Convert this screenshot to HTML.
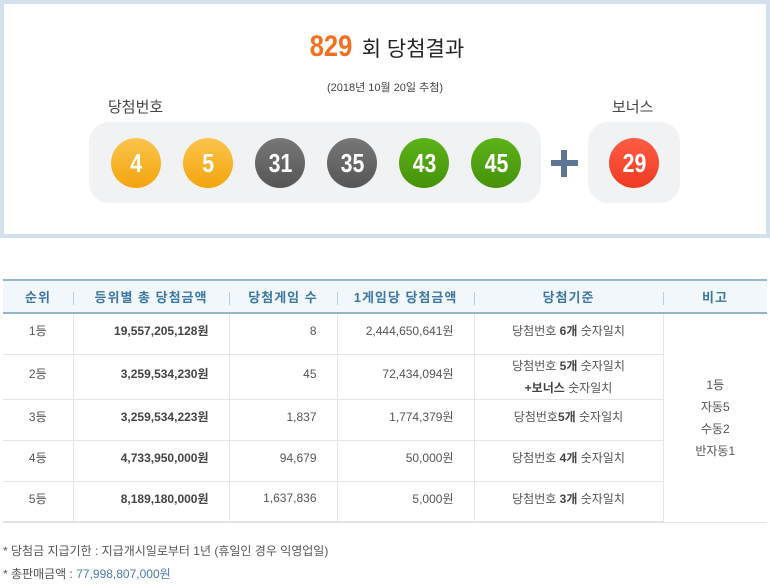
<!DOCTYPE html>
<html><head><meta charset="utf-8"><style>
*{margin:0;padding:0;box-sizing:border-box}
body{width:770px;height:586px;background:#fff;font-family:"Liberation Sans","Noto Sans CJK KR",sans-serif;position:relative;overflow:hidden;color:#333}
.top{position:absolute;left:0;top:0;width:770px;height:238px;border:4px solid #d4e1ed;background:#fff}
.a{position:absolute;white-space:nowrap}
.ball{position:absolute;top:138px;width:50px;height:50px;border-radius:50%;color:#fff;font-weight:bold;font-size:26px;text-align:center;line-height:50px}
.ball span{display:inline-block;transform:scaleX(0.82)}
.y{background:linear-gradient(#fbc44b,#f3a40d)}
.g{background:linear-gradient(#777,#555)}
.gr{background:linear-gradient(#5cb31a,#469209)}
.r{background:linear-gradient(#ff5c45,#ef3b23)}
table{position:absolute;left:3px;top:279px;width:764px;border-collapse:collapse;font-size:12px;color:#555}
th{height:33px;background:#f1f7fb;color:#3d78a4;font-weight:bold;font-size:13px;letter-spacing:1px;border-top:2px solid #94b5cc;border-bottom:2px solid #94b5cc;position:relative}
th+th:before{content:"";position:absolute;left:0;top:11px;height:13px;border-left:1px solid #b8cfdf}
td{border-bottom:1px solid #e5e5e5;border-left:1px solid #e5e5e5;height:41px;padding-bottom:6px}
td:first-child{border-left:none}
.n{text-align:right;padding-right:20px}
.c{text-align:center}
b{color:#444}
</style></head><body>
<div class="top"></div>
<div class="a" style="left:0;width:770px;top:30px;text-align:center;font-size:21px;color:#222"><span style="color:#f37021;font-weight:bold;font-size:30px;display:inline-block;transform:scaleX(0.85)">829</span> 회 당첨결과</div>
<div class="a" style="left:0;width:770px;top:79px;text-align:center;font-size:11px;color:#444">(2018년 10월 20일 추첨)</div>
<div class="a" style="left:108px;top:96px;font-size:15px;color:#444">당첨번호</div>
<div class="a" style="left:612px;top:96px;font-size:15px;color:#444">보너스</div>
<div class="a" style="left:89px;top:122px;width:452px;height:81px;background:#f1f2f4;border-radius:20px"></div>
<div class="a" style="left:588px;top:122px;width:92px;height:81px;background:#f1f2f4;border-radius:20px"></div>
<div class="ball y" style="left:111px"><span>4</span></div>
<div class="ball y" style="left:183px"><span>5</span></div>
<div class="ball g" style="left:255px"><span>31</span></div>
<div class="ball g" style="left:327px"><span>35</span></div>
<div class="ball gr" style="left:399px"><span>43</span></div>
<div class="ball gr" style="left:471px"><span>45</span></div>
<div class="ball r" style="left:609px"><span>29</span></div>
<div class="a" style="left:551px;top:160px;width:27px;height:6px;background:#5d7593"></div>
<div class="a" style="left:561px;top:150px;width:6px;height:27px;background:#5d7593"></div>
<table>
<tr><th style="width:70px">순위</th><th style="width:156px">등위별 총 당첨금액</th><th style="width:108px">당첨게임 수</th><th style="width:137px">1게임당 당첨금액</th><th style="width:189px">당첨기준</th><th>비고</th></tr>
<tr><td class="c">1등</td><td class="n"><b>19,557,205,128원</b></td><td class="n">8</td><td class="n">2,444,650,641원</td><td class="c">당첨번호 <b>6개</b> 숫자일치</td><td rowspan="5" class="c" style="line-height:22px;padding-top:6px">1등<br>자동5<br>수동2<br>반자동1</td></tr>
<tr><td class="c" style="height:44px">2등</td><td class="n"><b>3,259,534,230원</b></td><td class="n">45</td><td class="n">72,434,094원</td><td class="c" style="line-height:22px;padding:0">당첨번호 <b>5개</b> 숫자일치<br><b>+보너스</b> 숫자일치</td></tr>
<tr><td class="c">3등</td><td class="n"><b>3,259,534,223원</b></td><td class="n">1,837</td><td class="n">1,774,379원</td><td class="c">당첨번호<b>5개</b> 숫자일치</td></tr>
<tr><td class="c">4등</td><td class="n"><b>4,733,950,000원</b></td><td class="n">94,679</td><td class="n">50,000원</td><td class="c">당첨번호 <b>4개</b> 숫자일치</td></tr>
<tr><td class="c" style="border-bottom:2px solid #e3e3e3">5등</td><td class="n" style="border-bottom:2px solid #e3e3e3"><b>8,189,180,000원</b></td><td class="n" style="border-bottom:2px solid #e3e3e3">1,637,836</td><td class="n" style="border-bottom:2px solid #e3e3e3">5,000원</td><td class="c" style="border-bottom:2px solid #e3e3e3">당첨번호 <b>3개</b> 숫자일치</td></tr>
</table>
<div class="a" style="left:3px;top:542px;font-size:12px;color:#555">* 당첨금 지급기한 : 지급개시일로부터 1년 (휴일인 경우 익영업일)</div>
<div class="a" style="left:3px;top:565px;font-size:12px;color:#555">* 총판매금액 : <span style="color:#4a79b0">77,998,807,000원</span></div>
</body></html>
